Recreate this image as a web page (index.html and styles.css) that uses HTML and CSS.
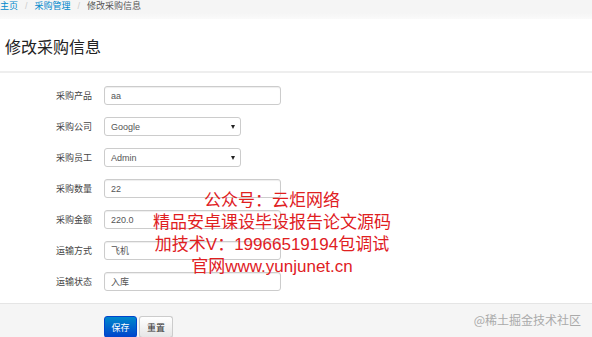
FILE: index.html
```html
<!DOCTYPE html>
<html lang="zh-CN">
<head>
    <meta charset="UTF-8">
    <meta name="viewport" content="width=device-width, initial-scale=1.0">
    <title>修改采购信息</title>
    <link rel="stylesheet" href="styles.css">
</head>
<body>
    <div class="breadcrumb">
        <a href="#">主页</a><span class="divider">/</span><a href="#">采购管理</a><span class="divider">/</span><span class="active">修改采购信息</span>
    </div>

    <h1 class="page-title">修改采购信息</h1>

    <form class="form">
        <div class="group">
            <label>采购产品</label>
            <input class="field" type="text" value="aa">
        </div>
        <div class="group">
            <label>采购公司</label>
            <div class="select">Google<span class="caret"></span></div>
        </div>
        <div class="group">
            <label>采购员工</label>
            <div class="select">Admin<span class="caret"></span></div>
        </div>
        <div class="group">
            <label>采购数量</label>
            <input class="field" type="text" value="22">
        </div>
        <div class="group">
            <label>采购金额</label>
            <input class="field" type="text" value="220.0">
        </div>
        <div class="group">
            <label>运输方式</label>
            <input class="field" type="text" value="飞机">
        </div>
        <div class="group">
            <label>运输状态</label>
            <input class="field" type="text" value="入库">
        </div>

        <div class="actions">
            <button type="button" class="btn btn-primary">保存</button>
            <button type="button" class="btn">重置</button>
        </div>
    </form>

    <div class="watermark">
        <p>公众号：云炬网络</p>
        <p>精品安卓课设毕设报告论文源码</p>
        <p>加技术V：19966519194包调试</p>
        <p>官网www.yunjunet.cn</p>
    </div>

    <div class="credit">@稀土掘金技术社区</div>
</body>
</html>
```

FILE: styles.css
```css
*{
    margin: 0;
    padding: 0;
    box-sizing: border-box;
    font-family: "Liberation Sans", Arial, "Noto Sans CJK SC", sans-serif;
}
body{
    width: 592px;
    height: 337px;
    overflow: hidden;
    position: relative;
    background-color: #fff;
    color: #333;
}
.breadcrumb{
    height: 19px;
    font-size: 9px;
    line-height: 12px;
    background: linear-gradient(#f5f5f5 0, #f5f5f5 13px, #fafafa 19px);
    color: #555;
}
.breadcrumb a{
    color: #08c;
    text-decoration: none;
}
.divider{
    color: #ccc;
    padding: 0 7px;
}
.page-title{
    font-size: 16px;
    font-weight: normal;
    color: #222;
    padding: 19px 0 0 5px;
    height: 54px;
    line-height: 20px;
    border-bottom: 2px solid #eee;
}
.form{
    padding-top: 13px;
}
.group{
    display: flex;
    align-items: center;
    height: 19px;
    margin-bottom: 12px;
}
.group label{
    width: 92px;
    text-align: right;
    font-size: 9px;
    color: #444;
    margin-right: 12px;
}
.field, .select{
    height: 19px;
    border: 1px solid #ccc;
    border-radius: 3px;
    box-shadow: inset 0 1px 1px rgba(0, 0, 0, 0.07);
    font-size: 9px;
    color: #555;
    padding: 0 6px;
    background: #fff;
}
.field{
    width: 177px;
}
.select{
    width: 137px;
    display: flex;
    align-items: center;
    justify-content: space-between;
    box-shadow: none;
    padding: 0 5px 0 6px;
}
.caret{
    width: 0;
    height: 0;
    border-left: 2px solid transparent;
    border-right: 2px solid transparent;
    border-top: 4px solid #222;
}
.actions{
    border-top: 1px solid #e5e5e5;
    background-color: #f5f5f5;
    height: 40px;
    padding: 12px 0 0 104px;
    display: flex;
    gap: 2px;
    align-items: flex-start;
}
.btn{
    height: 22px;
    width: 34px;
    font-size: 9px;
    border: 1px solid #ccc;
    border-bottom-color: #b3b3b3;
    border-radius: 3px;
    background: linear-gradient(#fff, #e6e6e6);
    color: #333;
}
.btn-primary{
    width: 33px;
    color: #fff;
    border-color: #04c;
    background: linear-gradient(#08c, #04c);
}
.watermark{
    position: absolute;
    left: 140px;
    top: 190px;
    width: 264px;
    text-align: center;
    color: #e0201f;
    font-family: "Noto Sans CJK SC", sans-serif;
    font-size: 17px;
    line-height: 22px;
}
.credit{
    position: absolute;
    right: 11px;
    top: 311px;
    font-size: 12px;
    color: #aaa;
    font-family: "Noto Sans CJK SC", sans-serif;
}
```
